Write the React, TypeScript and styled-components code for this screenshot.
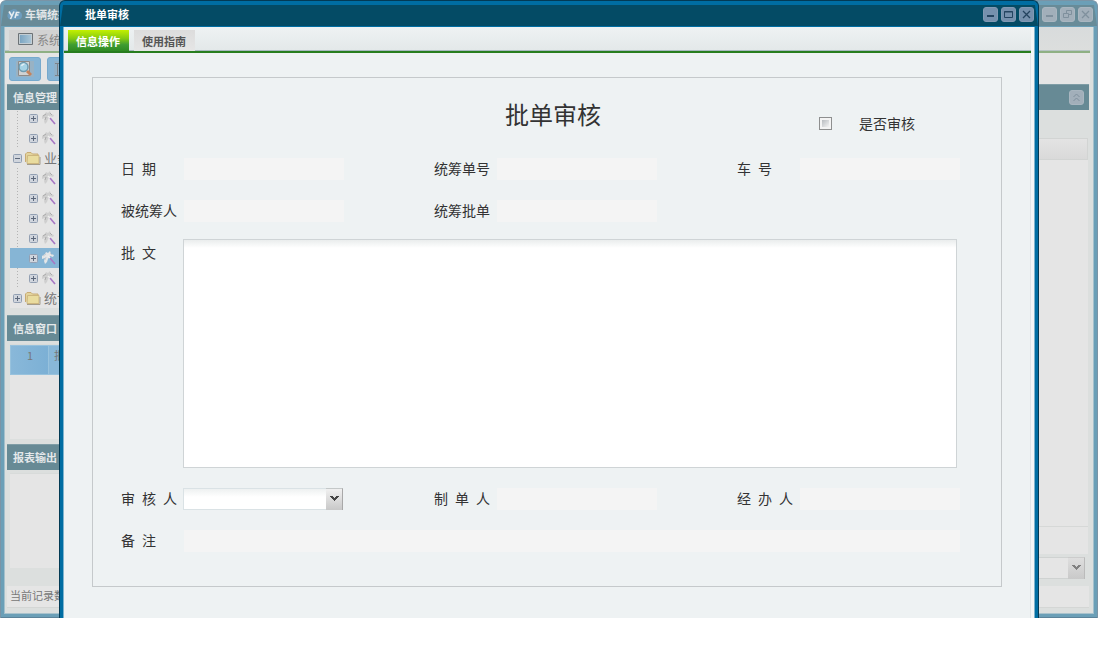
import React from 'react';
import styled, { createGlobalStyle, css } from 'styled-components';

const GlobalStyle = createGlobalStyle`
  *, *::before, *::after { box-sizing: border-box; }
  body {
    margin: 0;
    background: #fff;
    color: #333;
    font-family: 'Noto Sans CJK SC', sans-serif;
    font-size: 12px;
    line-height: 16px;
  }
  button, input, select, textarea { font: inherit; color: inherit; margin: 0; }
  h1, h2, ul { margin: 0; padding: 0; }
`;

/* ---------- window chrome ---------- */

const Page = styled.div`
  position: relative;
`;

const Frame = styled.section<{ $faded?: boolean }>`
  border-radius: 6px 6px 0 0;
  border: 1px solid ${p => (p.$faded ? '#7a94a6' : '#033a54')};
  border-bottom: 0;
  background: ${p => (p.$faded ? '#6b9fb7' : '#006da2')};
  overflow: hidden;
`;

const FrameFoot = styled.div`
  height: 4px;
  border-bottom: 1px solid #5b8299;
`;

const Dialog = styled(Frame)`
  position: absolute;
  top: 0;
  left: 59px;
  right: 59px;
`;

const TitleBar = styled.header`
  height: 26px;
  padding-top: 4px;
`;

const TitleFace = styled.div<{ $faded?: boolean; $dialog?: boolean }>`
  display: flex;
  align-items: center;
  justify-content: space-between;
  height: 21px;
  padding: 0 4px 3px ${p => (p.$dialog ? 25 : 5)}px;
  border-radius: 3px 3px 0 0;
  background: ${p => (p.$faded ? '#688b98' : '#044b65')};
  clip-path: polygon(3px 0, calc(100% - 3px) 0, 100% 100%, 0 100%);
`;

const WindowTitle = styled.h1<{ $faded?: boolean }>`
  display: flex;
  align-items: center;
  gap: 3px;
  font-size: 11px;
  line-height: 16px;
  font-weight: 700;
  color: ${p => (p.$faded ? '#e2e6e8' : '#fff')};
  white-space: nowrap;
`;

const WindowButtons = styled.div`
  display: flex;
  gap: 3px;
`;

const WindowButton = styled.button<{ $faded?: boolean }>`
  display: block;
  width: 15px;
  height: 15px;
  padding: 0;
  border: 1px solid ${p => (p.$faded ? '#a9b6c0' : '#8199b3')};
  border-radius: 3px;
  background: ${p => (p.$faded ? '#a2afba' : '#7590ad')};
  color: ${p => (p.$faded ? '#7f909d' : '#244460')};
  svg { display: block; }
`;

const WindowBody = styled.div<{ $faded?: boolean }>`
  margin: 0 3px;
  border-left: 1px solid ${p => (p.$faded ? '#a4c0cc' : '#7fb4cd')};
  border-right: 1px solid ${p => (p.$faded ? '#a4c0cc' : '#7fb4cd')};
  background: ${p => (p.$faded ? '#dcdfde' : '#f3f6f7')};
`;

type Glyph = 'min' | 'max' | 'restore' | 'close' | 'collapse';

const glyphs: Record<Glyph, React.ReactNode> = {
  min: <path d="M3 8h7" strokeWidth="2" />,
  max: <path d="M2.5 3.5h8v6h-8zM2 4h9" />,
  restore: <path d="M5.500 5V2.500h5v4H8M2.500 5.500h5v4h-5z" />,
  close: <path d="M3 3l7 7M10 3l-7 7" strokeWidth="1.300" />,
  collapse: <path d="M3.500 6l3-3 3 3M3.500 10l3-3 3 3" />,
};

function ChromeButton({ glyph, label, faded }: { glyph: Glyph; label: string; faded?: boolean }) {
  return (
    <WindowButton type="button" aria-label={label} $faded={faded}>
      <svg width="13" height="13" viewBox="0 0 13 13" fill="none" stroke="currentColor">
        {glyphs[glyph]}
      </svg>
    </WindowButton>
  );
}

/* ---------- tabs ---------- */

const TabStrip = styled.nav<{ $faded?: boolean }>`
  display: flex;
  align-items: flex-end;
  gap: 5px;
  height: 26px;
  margin-right: 3px;
  padding-left: 4px;
  border-bottom: 2px solid ${p => (p.$faded ? '#8fb084' : '#277d1e')};
  background: ${p =>
    p.$faded ? 'linear-gradient(#d8dbdc, #dcdedd)' : 'linear-gradient(#eef2f3, #e3e8e9)'};
  box-shadow: inset 0 -1px 0 ${p => (p.$faded ? '#b7c4c4' : '#a9b9c0')};
`;

const Tab = styled.button<{ $active?: boolean; $faded?: boolean }>`
  display: flex;
  align-items: center;
  gap: 4px;
  min-width: 61px;
  height: 21px;
  padding: 0 8px;
  border: 0;
  font-size: 11px;
  line-height: 16px;
  font-weight: 700;
  white-space: nowrap;
  color: #555;
  background: linear-gradient(#dcdcdc, #e6e6e6);
  ${p => p.$active && css`
    color: #fff;
    background: linear-gradient(#c3f000, #86cb10 40%, #3f9c32 70%, #2e8a22);
  `}
  ${p => p.$faded && css`
    padding-bottom: 2px;
    font-weight: 400;
    font-size: 12px;
    color: #888;
    background: #d2d2d2;
  `}
`;

/* ---------- main window ---------- */

const Toolbar = styled.div`
  display: flex;
  gap: 6px;
  height: 31px;
  margin-right: 3px;
  padding: 4px 4px 3px;
  background: #e5e5e5;
`;

const ToolButton = styled.button`
  display: grid;
  place-items: center;
  width: 32px;
  height: 24px;
  padding: 0;
  border: 1px solid #76a9cd;
  border-radius: 3px;
  background: #86b4d5;
`;

const Workspace = styled.div`
  display: flex;
  margin: 0 4px 0 2px;
`;

const Sidebar = styled.aside`
  width: 200px;
  padding-bottom: 13px;
`;

const Main = styled.main`
  flex: 1;
  min-width: 0;
  display: flex;
  flex-direction: column;
`;

const PanelHeader = styled.h2`
  display: flex;
  align-items: center;
  justify-content: space-between;
  height: 26px;
  padding: 0 5px 1px 6px;
  border-top: 1px solid #7f9da6;
  background: #678a95;
  color: #e4e8ea;
  font-size: 11px;
  line-height: 16px;
  font-weight: 700;
`;

const Tree = styled.ul`
  height: 198px;
  margin: 0 3px 7px;
  overflow: hidden;
  list-style: none;
  background: #e5e5e5;
`;

const TreeRow = styled.li<{ $leaf?: boolean; $selected?: boolean }>`
  display: flex;
  align-items: center;
  gap: ${p => (p.$leaf ? 4 : 3)}px;
  height: 20px;
  padding-left: ${p => (p.$leaf ? 19 : 3)}px;
  color: #777;
  font-size: 13px;
  background: ${p => (p.$selected ? '#86b5d5' : 'none')};
  background-image: ${p =>
    p.$leaf && !p.$selected ? 'repeating-linear-gradient(#b4b4b4 0 1px, transparent 1px 3px)' : 'none'};
  background-size: 1px 100%;
  background-position: 7px 0;
  background-repeat: no-repeat;
  &:first-child { margin-top: -2px; }
`;

const ListBox = styled.div`
  height: 95px;
  margin: 3px 3px 5px;
  border-top: 1px solid #d8dbda;
  background: #e5e5e5;
`;

const ListRow = styled.div`
  display: grid;
  grid-template-columns: 38px 1fr;
  height: 30px;
  border: 1px solid #98c2dd;
  background: linear-gradient(90deg, #89b8d9, #7cb0d5 37px, #98c2dd 37px 38px, #88b7d8 38px);
  color: #777;
  font-size: 11px;
  line-height: 18px;
  & > :first-child { text-align: center; }
  & > :last-child { padding-left: 5px; }
`;

const GridHead = styled.div`
  height: 22px;
  margin: 28px 1px 0 0;
  border: 1px solid #d2d4d3;
  background: linear-gradient(#e3e3e3, #d9d9d9);
`;

const GridBody = styled.div`
  flex: 1;
  margin-right: 1px;
  border-bottom: 1px solid #d6d8d7;
  background: #e5e5e5;
`;

const GridFoot = styled.div`
  height: 27px;
  margin-right: 1px;
  background: #e5e5e5;
`;

const Pager = styled.div`
  display: flex;
  justify-content: flex-end;
  padding: 3px 4px 7px 0;
`;

const StatusBar = styled.footer`
  height: 22px;
  margin: 0 4px 0 2px;
  padding: 1px 3px;
  border-bottom: 1px solid #d4d6d5;
  background: #e5e5e5;
  color: #777;
  font-size: 11px;
`;

const BottomEdge = styled.div`
  height: 6px;
  border-bottom: 1px solid #a9c2cc;
`;

/* ---------- form ---------- */

const Content = styled.div`
  margin-right: 3px;
  padding: 24px 28px 31px 28px;
  background: #eef2f3;
  border-right: 1px solid #dfe5e8;
  border-bottom: 1px solid #dbe8ee;
`;

const Form = styled.form`
  padding: 0 41px 24px 28px;
  border: 1px solid #c5c9cb;
`;

const Columns = styled.div`
  display: grid;
  grid-template-columns: 313fr 303fr 223px;
  align-items: center;
  min-height: 42px;
`;

const Heading = styled(Columns)`
  align-items: start;
  height: 70px;
  padding-top: 18px;
`;

const FormTitle = styled.h2`
  grid-column: 2;
  padding-left: 71px;
  font-size: 24px;
  line-height: 36px;
  font-weight: 400;
`;

const CheckField = styled.label`
  display: flex;
  align-items: center;
  gap: 27px;
  padding: 17px 0 0 82px;
  font-size: 14px;
  line-height: 20px;
  white-space: nowrap;
`;

const CheckBox = styled.input`
  appearance: none;
  width: 13px;
  height: 13px;
  padding: 2px;
  border: 1px solid #8e8f8f;
  background: linear-gradient(135deg, #b8bcc0, #f4f4f4) content-box, #f4f4f4;
`;

const Line = styled.div`
  display: flex;
  align-items: flex-start;
  padding: 7px 3px 10px 0;
`;

const FullRow = styled.div`
  display: flex;
  align-items: center;
  height: 42px;
`;

const FieldGroup = styled.div`
  display: flex;
  align-items: center;
`;

const Label = styled.label`
  flex: none;
  width: 62px;
  padding-bottom: 2px;
  font-size: 14px;
  line-height: 20px;
  white-space: nowrap;
`;

const AreaLabel = styled(Label)`
  padding-top: 3px;
`;

const ReadOnly = styled.input<{ $wide?: boolean }>`
  width: ${p => (p.$wide ? '100%' : '160px')};
  height: 22px;
  margin-left: 1px;
  padding: 0 4px;
  border: 0;
  background: #f4f4f4;
`;

const Area = styled.textarea`
  display: block;
  flex: 1;
  height: 229px;
  padding: 4px;
  border: 1px solid #cfd4d6;
  background: linear-gradient(#eaeded, #fff 8px);
  resize: none;
`;

const SelectBox = styled.div`
  position: relative;
  width: 160px;
  height: 22px;
`;

const Select = styled.select<{ $faded?: boolean }>`
  appearance: none;
  width: 100%;
  height: 100%;
  padding: 0 20px 0 4px;
  border: 1px solid ${p => (p.$faded ? '#cfd2d1' : '#dae2e5')};
  border-radius: 0;
  background: ${p => (p.$faded ? '#e5e5e5' : 'linear-gradient(#eef1f1, #fff 8px)')};
`;

const SelectArrow = styled.span<{ $faded?: boolean }>`
  position: absolute;
  top: 0;
  right: 0;
  display: grid;
  place-items: center;
  width: 17px;
  height: 22px;
  padding-bottom: 2px;
  border-right: 1px solid ${p => (p.$faded ? '#bbb' : '#a8a8a8')};
  border-top: 1px solid ${p => (p.$faded ? '#ccc' : '#c4c8c8')};
  background: ${p =>
    p.$faded ? 'linear-gradient(#dedede, #c9c9c9)' : 'linear-gradient(#f0f0f0, #c8c8c8)'};
  color: ${p => (p.$faded ? '#808080' : '#444')};
  pointer-events: none;
`;

function DropDown({ id, label, faded }: { id: string; label?: string; faded?: boolean }) {
  return (
    <SelectBox>
      <Select id={id} aria-label={label} $faded={faded}>
        <option value="" />
      </Select>
      <SelectArrow $faded={faded}>
        <svg width="9" height="6" viewBox="0 0 9 6" fill="currentColor" shapeRendering="crispEdges">
          <path d="M0 0h3v1h1v1h1V1h1V0h3v1H8v1H7v1H6v1H5v1H4V4H3V3H2V2H1V1H0z" />
        </svg>
      </SelectArrow>
    </SelectBox>
  );
}

function Field({ id, label }: { id: string; label: string }) {
  return (
    <FieldGroup>
      <Label htmlFor={id}>{label}</Label>
      <ReadOnly id={id} readOnly />
    </FieldGroup>
  );
}

/* ---------- icons ---------- */

const Expander = ({ open }: { open?: boolean }) => (
  <svg width="9" height="9" viewBox="0 0 9 9" fill="none">
    <rect x=".5" y=".5" width="8" height="8" rx="1" fill="#d0d5dd" stroke="#93a0b3" />
    <path d={open ? 'M2 4.500h5' : 'M2 4.500h5M4.500 2v5'} stroke="#5d687b" />
  </svg>
);

const Folder = () => (
  <svg width="16" height="13" viewBox="0 0 16 13">
    <path d="M.5 10V2L2 .5h4L7.500 2H13v3" fill="#e3d49d" stroke="#c9ab74" />
    <path d="M2.500 3.500h11.500v8H2z" fill="#e9dc9f" stroke="#cdb67f" />
    <path d="M2 12.500h13V5" fill="none" stroke="#a39c8c" />
  </svg>
);

const Wand = ({ bright }: { bright?: boolean }) => (
  <svg width="14" height="14" viewBox="0 0 14 14">
    <path d="M0 5l3-2 1-2 2 1 2-2 1 3 3 1-1 2-3-1-2 3-1 3-2 2-1-3 1-3-3 1z" fill={bright ? '#e4e6e8' : '#cfcfcf'} />
    <path d="M1 5l3-2M3 9l1-3M8 2l2 2" stroke={bright ? '#c8ccd0' : '#aaa'} fill="none" />
    <path d="M8 7l5 6" stroke="#a777c4" strokeWidth="1.600" />
    <path d="M6 5l2 2" stroke="#eee" strokeWidth="1.500" />
  </svg>
);

const Logo = () => (
  <svg width="16" height="14" viewBox="0 0 16 14">
    <path d="M4 12.500a4 4 0 0 1-1-7 5 5 0 0 1 9-1 4 4 0 0 1 0 8z" fill="#6d9dbf" />
    <path d="M3 4.500l2.500 4M8 4.500L4.500 12M9 11l1.500-5.500h3M10 8h2.500" stroke="#e6ecf0" strokeWidth="1.600" fill="none" />
  </svg>
);

const Monitor = () => (
  <svg width="16" height="13" viewBox="0 0 16 13">
    <defs>
      <linearGradient id="screen">
        <stop offset="0" stopColor="#7ba5c2" />
        <stop offset="1" stopColor="#a9c5d6" />
      </linearGradient>
    </defs>
    <path d="M1.500.5h14v11h-14z" fill="#c3cdd3" stroke="#6d7377" />
    <path d="M3 2h11v8H3z" fill="url(#screen)" />
  </svg>
);

const Search = () => (
  <svg width="20" height="18" viewBox="0 0 20 18" fill="none">
    <path d="M1 1h18v16H1z" fill="#98b2c4" />
    <path d="M3.500 1.500h11v14h-11z" fill="#d0d2d3" stroke="#8d8a88" />
    <circle cx="8.500" cy="7" r="4.500" fill="#a5d3e6" stroke="#6e9bb0" strokeWidth="1.500" />
    <path d="M6.500 6a3 3 0 0 1 3-2" stroke="#e2eef3" strokeWidth="1.500" />
    <path d="M12 11l4 4" stroke="#c4825c" strokeWidth="2.800" />
  </svg>
);

const Sheet = () => (
  <svg width="20" height="18" viewBox="0 0 20 18" fill="none">
    <path d="M1 1h18v16H1z" fill="#8fb0c8" />
    <path d="M2 3.500h14M4.500 3v12M2 15.500h14M13.500 3v12" stroke="#7d8288" />
  </svg>
);

/* ---------- page ---------- */

const treeRows: { label?: string; open?: boolean; selected?: boolean }[] = [
  {}, {}, { label: '业务', open: true }, {}, {}, {}, {}, { selected: true }, {}, { label: '统计' },
];

export default function App() {
  return (
    <Page>
      <GlobalStyle />
      <Frame $faded>
        <TitleBar>
          <TitleFace $faded>
            <WindowTitle $faded>
              <Logo />
              车辆统筹
            </WindowTitle>
            <WindowButtons>
              <ChromeButton faded glyph="min" label="最小化" />
              <ChromeButton faded glyph="restore" label="还原" />
              <ChromeButton faded glyph="close" label="关闭" />
            </WindowButtons>
          </TitleFace>
        </TitleBar>
        <WindowBody $faded>
          <TabStrip $faded>
            <Tab $faded type="button">
              <Monitor />
              系统
            </Tab>
          </TabStrip>
          <Toolbar>
            <ToolButton type="button" aria-label="查询"><Search /></ToolButton>
            <ToolButton type="button" aria-label="报表"><Sheet /></ToolButton>
          </Toolbar>
          <Workspace>
            <Sidebar>
              <PanelHeader>信息管理</PanelHeader>
              <Tree>
                {treeRows.map((row, i) => (
                  <TreeRow key={i} $leaf={!row.label} $selected={row.selected}>
                    <Expander open={row.open} />
                    {row.label ? <Folder /> : <Wand bright={row.selected} />}
                    {row.label}
                  </TreeRow>
                ))}
              </Tree>
              <PanelHeader>信息窗口</PanelHeader>
              <ListBox>
                <ListRow>
                  <span>1</span>
                  <span>批</span>
                </ListRow>
              </ListBox>
              <PanelHeader>报表输出</PanelHeader>
              <ListBox />
            </Sidebar>
            <Main>
              <PanelHeader>
                <span />
                <ChromeButton faded glyph="collapse" label="折叠" />
              </PanelHeader>
              <GridHead />
              <GridBody />
              <GridFoot />
              <Pager>
                <DropDown faded id="page-size" label="每页记录数" />
              </Pager>
            </Main>
          </Workspace>
          <StatusBar>当前记录数</StatusBar>
          <BottomEdge />
        </WindowBody>
        <FrameFoot />
      </Frame>

      <Dialog role="dialog" aria-label="批单审核">
        <TitleBar>
          <TitleFace $dialog>
            <WindowTitle>批单审核</WindowTitle>
            <WindowButtons>
              <ChromeButton glyph="min" label="最小化" />
              <ChromeButton glyph="max" label="最大化" />
              <ChromeButton glyph="close" label="关闭" />
            </WindowButtons>
          </TitleFace>
        </TitleBar>
        <WindowBody>
          <TabStrip>
            <Tab $active type="button">信息操作</Tab>
            <Tab type="button">使用指南</Tab>
          </TabStrip>
          <Content>
            <Form>
              <Heading>
                <FormTitle>批单审核</FormTitle>
                <CheckField>
                  <CheckBox type="checkbox" />
                  是否审核
                </CheckField>
              </Heading>
              <Columns>
                <Field id="date" label={'日\u2002期'} />
                <Field id="policy-no" label="统筹单号" />
                <Field id="plate" label={'车\u2002号'} />
              </Columns>
              <Columns>
                <Field id="insured" label="被统筹人" />
                <Field id="endorsement" label="统筹批单" />
              </Columns>
              <Line>
                <AreaLabel htmlFor="text">{'批\u2002文'}</AreaLabel>
                <Area id="text" />
              </Line>
              <Columns>
                <FieldGroup>
                  <Label htmlFor="auditor">{'审\u2002核\u2002人'}</Label>
                  <DropDown id="auditor" />
                </FieldGroup>
                <Field id="maker" label={'制\u2002单\u2002人'} />
                <Field id="handler" label={'经\u2002办\u2002人'} />
              </Columns>
              <FullRow>
                <Label htmlFor="remark">{'备\u2002注'}</Label>
                <ReadOnly $wide id="remark" readOnly />
              </FullRow>
            </Form>
          </Content>
        </WindowBody>
      </Dialog>
    </Page>
  );
}
